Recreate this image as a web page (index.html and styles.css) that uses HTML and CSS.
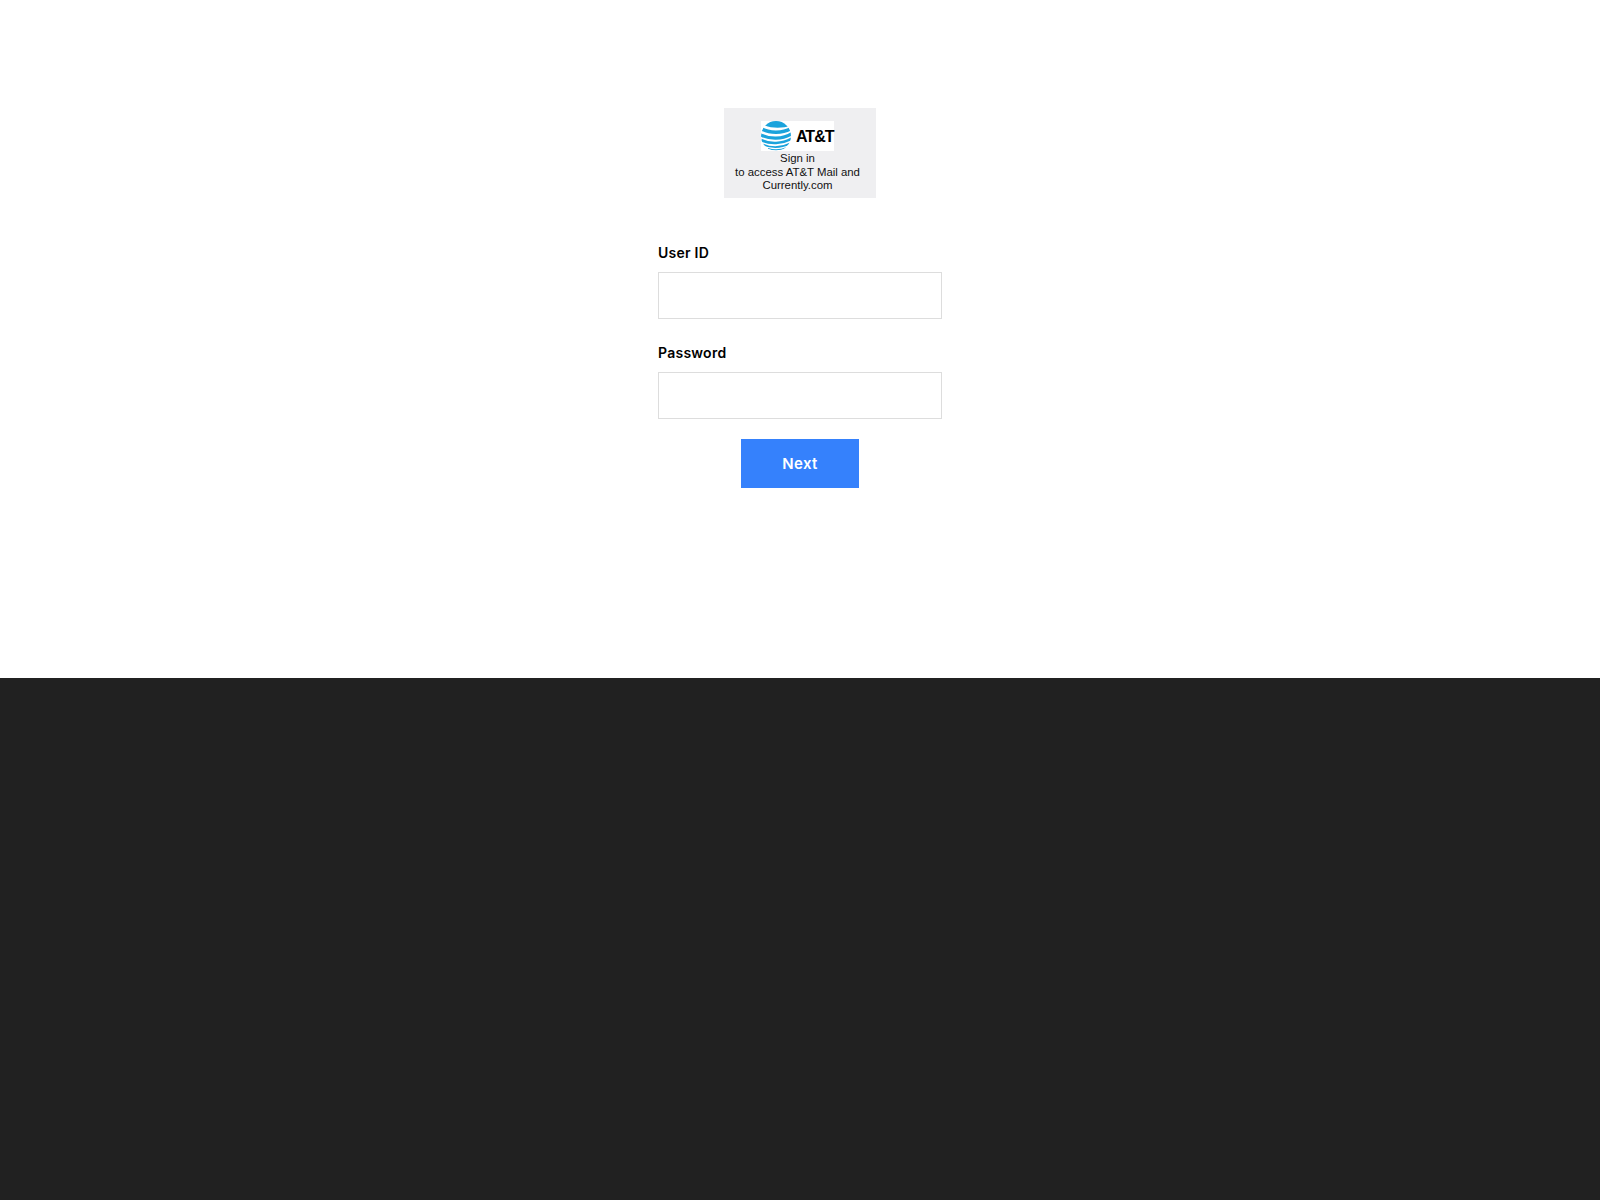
FILE: index.html
```html
<!DOCTYPE html>
<html lang="en">
<head>
  <meta charset="UTF-8">
  <title>Sign in</title>
  <link rel="stylesheet" href="styles.css">
</head>
<body>
  <div class="main">
    <div class="logo-box">
      <div class="logo">
        <svg class="globe" width="30" height="30" viewBox="0 0 30 30">
          <defs>
            <clipPath id="globe-clip"><circle cx="15" cy="15" r="15"/></clipPath>
          </defs>
          <g clip-path="url(#globe-clip)">
            <path d="M0 0H30V4.500C22 7.500 11 7.500 4 4.500L0 3Z" fill="#1ba3dc"/>
            <g fill="none" stroke="#1ba3dc">
              <path d="M0 7.500C8 12.500 22 12.500 30 7.500" stroke-width="3.600"/>
              <path d="M-1 13.500C8 18.500 22 18.500 31 12.500" stroke-width="3.200"/>
              <path d="M0 19C9 23.500 21 23 31 17.500" stroke-width="2.600"/>
              <path d="M2 23.500C11 27.500 21 26.500 29 22.500" stroke-width="1.800"/>
              <path d="M7 27.500C13 29.500 20 29 26 26.500" stroke-width="1.100"/>
            </g>
          </g>
        </svg>
        <span class="logo-name">AT&amp;T</span>
      </div>
      <div class="logo-text">Sign in<br>to access AT&amp;T Mail and<br>Currently.com</div>
    </div>

    <form class="login-form">
      <label class="field-label" for="user-id">User ID</label>
      <input class="field-input" id="user-id" type="text">
      <label class="field-label" for="password">Password</label>
      <input class="field-input" id="password" type="password">
      <button class="next-button" type="button">Next</button>
    </form>
  </div>
  <div class="footer"></div>
</body>
</html>
```

FILE: styles.css
```css
html, body {
  height: 100%;
}
body {
  margin: 0;
  display: flex;
  flex-direction: column;
  font-family: Inter, "Liberation Sans", sans-serif;
  background-color: #fff;
}
.main {
  height: 678px;
  padding-top: 108px;
  box-sizing: border-box;
  display: flex;
  flex-direction: column;
  align-items: center;
}
.footer {
  flex: 1;
  background-color: #212121;
}
.logo-box {
  width: 152px;
  height: 90px;
  padding-top: 13px;
  box-sizing: border-box;
  background-color: #efeff1;
  display: flex;
  flex-direction: column;
  align-items: center;
}
.logo {
  width: 73px;
  height: 30px;
  margin-right: 5px;
  background-color: #fff;
  display: flex;
  align-items: center;
  gap: 5px;
}
.globe {
  flex-shrink: 0;
}
.logo-name {
  padding-top: 1px;
  font-family: "Liberation Sans", Arial, sans-serif;
  font-size: 16px;
  font-weight: 700;
  letter-spacing: -1px;
  color: #000;
}
.logo-text {
  margin-top: 1px;
  margin-right: 5px;
  font-family: "Liberation Sans", Arial, sans-serif;
  font-size: 11.4px;
  line-height: 13.5px;
  text-align: center;
  color: #111;
}
.login-form {
  width: 284px;
  margin-top: 45px;
  display: flex;
  flex-direction: column;
}
.field-label {
  font-size: 14px;
  font-weight: 600;
  letter-spacing: 0.25px;
  line-height: 19px;
  color: #000;
  margin-bottom: 10px;
}
.field-input {
  height: 47px;
  margin-bottom: 24px;
  padding: 0 12px;
  box-sizing: border-box;
  border: 1px solid #ddd;
  border-radius: 0;
  outline: none;
  background-color: #fff;
}
.field-input:last-of-type {
  margin-bottom: 20px;
}
.next-button {
  width: 118px;
  height: 49px;
  align-self: center;
  border: none;
  background-color: #3581fc;
  color: #fff;
  font-family: Inter, "Liberation Sans", sans-serif;
  font-size: 15px;
  font-weight: 600;
  letter-spacing: 0.4px;
}
```
